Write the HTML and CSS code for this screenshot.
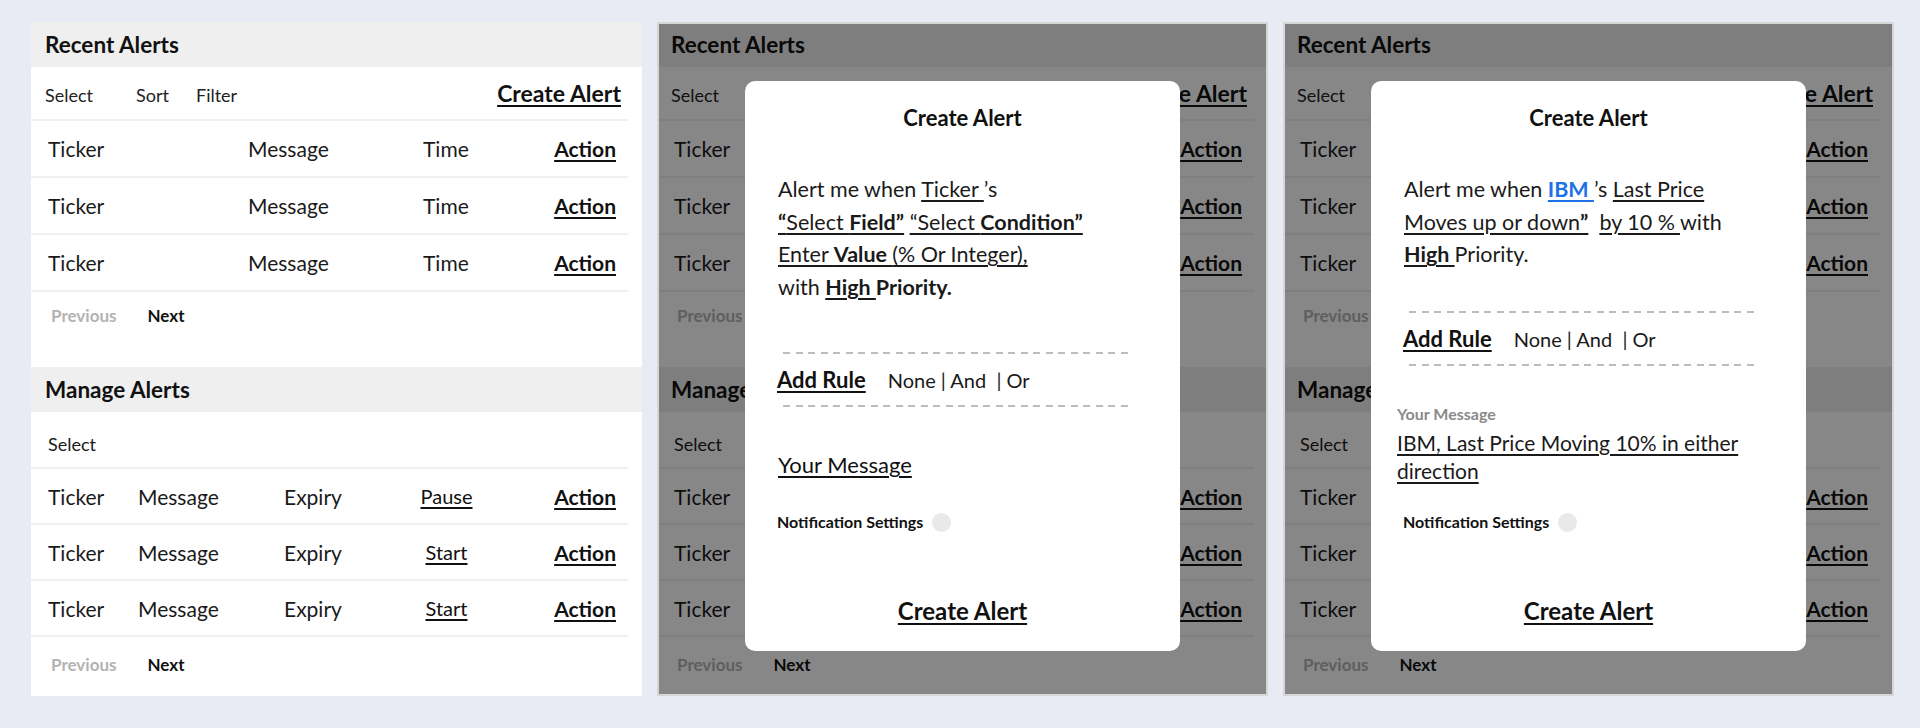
FILE: index.html
```html
<!DOCTYPE html>
<html lang="en">
<head>
    <meta charset="UTF-8">
    <title>Alerts - Create Alert flow</title>
    <link rel="stylesheet" href="styles.css">
</head>
<body>

<div class="board">

    <!-- Screen 1: alerts list -->
    <section class="screen">
        <div class="panel-head">Recent Alerts</div>
        <div class="toolbar">
            <span>Select</span>
            <span>Sort</span>
            <span>Filter</span>
            <a class="link-big">Create Alert</a>
        </div>
        <div class="row recent-row"><span>Ticker</span><span>Message</span><span>Time</span><a class="link-bold">Action</a></div>
        <div class="row recent-row"><span>Ticker</span><span>Message</span><span>Time</span><a class="link-bold">Action</a></div>
        <div class="row recent-row"><span>Ticker</span><span>Message</span><span>Time</span><a class="link-bold">Action</a></div>
        <div class="pager pager-recent"><span class="prev">Previous</span><span class="next">Next</span></div>

        <div class="panel-head">Manage Alerts</div>
        <div class="row select-row"><span>Select</span></div>
        <div class="row manage-row"><span>Ticker</span><span>Message</span><span>Expiry</span><a class="link-plain">Pause</a><a class="link-bold">Action</a></div>
        <div class="row manage-row"><span>Ticker</span><span>Message</span><span>Expiry</span><a class="link-plain">Start</a><a class="link-bold">Action</a></div>
        <div class="row manage-row"><span>Ticker</span><span>Message</span><span>Expiry</span><a class="link-plain">Start</a><a class="link-bold">Action</a></div>
        <div class="pager pager-manage"><span class="prev">Previous</span><span class="next">Next</span></div>
    </section>

    <!-- Screen 2: empty create alert modal -->
    <section class="screen">
        <div class="panel-head">Recent Alerts</div>
        <div class="toolbar">
            <span>Select</span>
            <span>Sort</span>
            <span>Filter</span>
            <a class="link-big">Create Alert</a>
        </div>
        <div class="row recent-row"><span>Ticker</span><span>Message</span><span>Time</span><a class="link-bold">Action</a></div>
        <div class="row recent-row"><span>Ticker</span><span>Message</span><span>Time</span><a class="link-bold">Action</a></div>
        <div class="row recent-row"><span>Ticker</span><span>Message</span><span>Time</span><a class="link-bold">Action</a></div>
        <div class="pager pager-recent"><span class="prev">Previous</span><span class="next">Next</span></div>

        <div class="panel-head">Manage Alerts</div>
        <div class="row select-row"><span>Select</span></div>
        <div class="row manage-row"><span>Ticker</span><span>Message</span><span>Expiry</span><a class="link-plain">Pause</a><a class="link-bold">Action</a></div>
        <div class="row manage-row"><span>Ticker</span><span>Message</span><span>Expiry</span><a class="link-plain">Start</a><a class="link-bold">Action</a></div>
        <div class="row manage-row"><span>Ticker</span><span>Message</span><span>Expiry</span><a class="link-plain">Start</a><a class="link-bold">Action</a></div>
        <div class="pager pager-manage"><span class="prev">Previous</span><span class="next">Next</span></div>

        <div class="overlay">
            <div class="modal">
                <h3 class="modal-title">Create Alert</h3>
                <p class="rule-text rule-empty">
                    Alert me when <u>Ticker </u>’s<br>
                    <u><b>“</b>Select <b>Field”</b></u> <u>“Select <b>Condition”</b></u><br>
                    <u>Enter <b>Value </b>(% Or Integer),</u><br>
                    with <b><u>High </u>Priority.</b>
                </p>
                <div class="dash"></div>
                <div class="rule-row"><a class="link-rule">Add Rule</a><span>None | And &nbsp;| Or</span></div>
                <div class="dash"></div>
                <a class="your-message">Your Message</a>
                <div class="modal-foot">
                    <div class="notify">Notification Settings <span class="toggle"></span></div>
                    <a class="link-big">Create Alert</a>
                </div>
            </div>
        </div>
    </section>

    <!-- Screen 3: filled create alert modal -->
    <section class="screen">
        <div class="panel-head">Recent Alerts</div>
        <div class="toolbar">
            <span>Select</span>
            <span>Sort</span>
            <span>Filter</span>
            <a class="link-big">Create Alert</a>
        </div>
        <div class="row recent-row"><span>Ticker</span><span>Message</span><span>Time</span><a class="link-bold">Action</a></div>
        <div class="row recent-row"><span>Ticker</span><span>Message</span><span>Time</span><a class="link-bold">Action</a></div>
        <div class="row recent-row"><span>Ticker</span><span>Message</span><span>Time</span><a class="link-bold">Action</a></div>
        <div class="pager pager-recent"><span class="prev">Previous</span><span class="next">Next</span></div>

        <div class="panel-head">Manage Alerts</div>
        <div class="row select-row"><span>Select</span></div>
        <div class="row manage-row"><span>Ticker</span><span>Message</span><span>Expiry</span><a class="link-plain">Pause</a><a class="link-bold">Action</a></div>
        <div class="row manage-row"><span>Ticker</span><span>Message</span><span>Expiry</span><a class="link-plain">Start</a><a class="link-bold">Action</a></div>
        <div class="row manage-row"><span>Ticker</span><span>Message</span><span>Expiry</span><a class="link-plain">Start</a><a class="link-bold">Action</a></div>
        <div class="pager pager-manage"><span class="prev">Previous</span><span class="next">Next</span></div>

        <div class="overlay">
            <div class="modal">
                <h3 class="modal-title">Create Alert</h3>
                <p class="rule-text rule-filled">
                    Alert me when <u class="ticker">IBM </u>’s <u>Last Price</u><br>
                    <u>Moves up or down<b>”</b></u>&nbsp; <u>by 10 % </u>with<br>
                    <u><b>High </b></u>Priority.
                </p>
                <div class="dash"></div>
                <div class="rule-row"><a class="link-rule">Add Rule</a><span>None | And &nbsp;| Or</span></div>
                <div class="dash"></div>
                <div class="message-label">Your Message</div>
                <div class="message-text"><u>IBM, Last Price Moving 10% in either direction</u></div>
                <div class="modal-foot">
                    <div class="notify">Notification Settings <span class="toggle"></span></div>
                    <a class="link-big">Create Alert</a>
                </div>
            </div>
        </div>
    </section>

</div>

</body>
</html>
```

FILE: styles.css
```css
/* Base */
body {
    margin: 0;
    background-color: #e8ebf3;
    font-family: "Lato", "Open Sans", sans-serif;
    color: #1a1a1a;
}

.board {
    display: flex;
    gap: 15px;
    padding: 22px 0 0 31px;
}

/* Screen card */
.screen {
    position: relative;
    width: 611px;
    height: 674px;
    background-color: #fff;
    display: flex;
    flex-direction: column;
}

.panel-head {
    height: 45px;
    line-height: 45px;
    padding-left: 14px;
    background-color: #efefef;
    font-size: 22.5px;
    font-weight: 700;
    color: #111;
    flex-shrink: 0;
}

/* Toolbar */
.toolbar {
    height: 54px;
    box-sizing: border-box;
    margin-right: 14px;
    padding: 0 7px 0 14px;
    border-bottom: 2px solid #f0f0f0;
    display: grid;
    grid-template-columns: 91px 60px 1fr auto;
    align-items: center;
    font-size: 18px;
    color: #222;
    flex-shrink: 0;
}

.toolbar span {
    padding-top: 4px;
}

/* Rows */
.row {
    box-sizing: border-box;
    margin-right: 14px;
    padding: 0 12px 0 17px;
    border-bottom: 2px solid #f0f0f0;
    display: grid;
    align-items: center;
    font-size: 21px;
    flex-shrink: 0;
}

.recent-row {
    height: 57px;
    grid-template-columns: 200px 175px 1fr auto;
}

.select-row {
    height: 57px;
    padding-top: 8px;
    font-size: 18px;
    grid-template-columns: 1fr;
}

.manage-row {
    height: 56px;
    grid-template-columns: 90px 146px 110px 105px 1fr;
}

.manage-row .link-plain {
    justify-self: center;
}

.manage-row .link-bold {
    justify-self: end;
}

/* Pager */
.pager {
    display: flex;
    gap: 31px;
    padding-left: 20px;
    font-size: 17px;
    font-weight: 700;
    line-height: 20px;
    box-sizing: border-box;
    flex-shrink: 0;
}

.pager-recent {
    height: 75px;
    padding-top: 14px;
}

.pager-manage {
    flex: 1;
    padding-top: 18px;
}

.pager .prev {
    color: #b3b3b3;
}

.pager .next {
    color: #111;
}

/* Links */
a {
    color: #111;
    cursor: pointer;
}

.link-bold,
.link-big,
.link-rule,
.link-plain,
.your-message,
u {
    text-decoration: underline;
    text-decoration-thickness: 1.5px;
    text-underline-offset: 3px;
}

.link-bold {
    font-weight: 700;
}

.link-big {
    font-size: 23px;
    font-weight: 700;
    text-decoration-thickness: 2px;
}

.link-plain {
    font-size: 20px;
}

/* Overlay + modal */
.overlay {
    position: absolute;
    inset: 0;
    background-color: rgba(0, 0, 0, 0.47);
    box-shadow: inset 0 0 0 2px #d6d6d6;
    display: flex;
    justify-content: center;
    align-items: flex-start;
    padding-top: 59px;
}

.modal {
    width: 435px;
    height: 570px;
    box-sizing: border-box;
    padding: 0 20px 25px 33px;
    background-color: #fff;
    border-radius: 10px;
    display: flex;
    flex-direction: column;
}

.modal-title {
    margin: 23px 0 0;
    font-size: 22px;
    line-height: 28px;
    font-weight: 700;
    text-align: center;
    color: #111;
    padding-right: 13px;
}

.rule-text {
    margin: 41px 0 0;
    font-size: 21.5px;
    line-height: 32.5px;
    color: #1a1a1a;
}

.rule-empty + .dash {
    margin-top: 49px;
}

.rule-filled + .dash {
    margin-top: 40px;
}

.ticker {
    color: #2070e8;
    font-weight: 700;
}

.dash {
    width: 350px;
    height: 2px;
    margin-left: 5px;
    background: repeating-linear-gradient(90deg, #bdbdbd 0 7px, transparent 7px 12.5px);
    flex-shrink: 0;
}

.rule-row {
    margin: 13px 0 12px -1px;
    display: flex;
    align-items: center;
    gap: 22px;
    font-size: 20px;
    line-height: 26px;
}

.link-rule {
    font-weight: 700;
    font-size: 22px;
}

.your-message {
    align-self: flex-start;
    margin-top: 45px;
    font-size: 22px;
    line-height: 26px;
}

.message-label {
    margin: 39px 0 0 -7px;
    font-size: 16px;
    font-weight: 700;
    line-height: 18px;
    color: #8a8a8a;
}

.message-text {
    margin: 6px 0 0 -7px;
    width: 360px;
    font-size: 21px;
    line-height: 28.5px;
}

.modal-foot {
    margin-top: auto;
    display: flex;
    flex-direction: column;
    align-items: center;
}

.notify {
    align-self: flex-start;
    margin-left: -1px;
    display: flex;
    align-items: center;
    gap: 9px;
    font-size: 16px;
    font-weight: 700;
    line-height: 20px;
    color: #111;
}

.toggle {
    width: 19px;
    height: 19px;
    border-radius: 50%;
    background-color: #e9e9e9;
}

.modal-foot .link-big {
    margin-top: 64px;
    font-size: 24px;
    line-height: 30px;
    padding-right: 13px;
}
```
